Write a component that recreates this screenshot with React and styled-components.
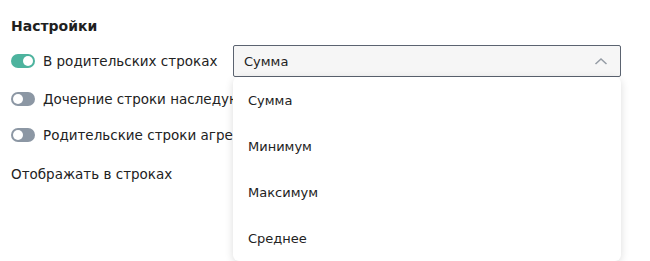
import React from 'react';
import styled, { createGlobalStyle } from 'styled-components';

const GlobalStyle = createGlobalStyle`
  body {
    margin: 0;
    background: #ffffff;
    font-family: "DejaVu Sans", Verdana, sans-serif;
    color: #222222;
  }
`;

const Panel = styled.div`
  box-sizing: border-box;
  padding: 16px 11px;
  width: 650px;
  min-height: 261px;
`;

const Title = styled.div`
  font-size: 14px;
  font-weight: 700;
  color: #1f1f1f;
  line-height: 20px;
  margin-bottom: 9px;
`;

const Rows = styled.div`
  display: flex;
  flex-direction: column;
`;

const Row = styled.div`
  display: flex;
  align-items: center;
  height: ${({ $h }) => $h}px;
  margin-top: ${({ $mt }) => $mt || 0}px;
`;

const Toggle = styled.div`
  position: relative;
  width: 24px;
  height: 14px;
  border-radius: 7px;
  background: ${({ $on }) => ($on ? '#4db39e' : '#8c97a4')};
  flex-shrink: 0;
  margin-right: 8px;
  &::after {
    content: '';
    position: absolute;
    top: 2px;
    left: ${({ $on }) => ($on ? '12px' : '2px')};
    width: 10px;
    height: 10px;
    border-radius: 50%;
    background: #ffffff;
  }
`;

const Label = styled.span`
  font-size: 13.5px;
  white-space: nowrap;
  color: #222222;
`;

const LabelCol = styled.div`
  display: flex;
  align-items: center;
  width: 222px;
`;

const SelectWrap = styled.div`
  position: relative;
  width: 388px;
`;

const SelectBox = styled.div`
  box-sizing: border-box;
  height: 32px;
  border: 1px solid #5b6370;
  border-radius: 2px;
  background: #f6f6f6;
  display: flex;
  align-items: center;
  justify-content: space-between;
  padding: 0 12px 0 10px;
  font-size: 13px;
`;

const Menu = styled.div`
  position: absolute;
  top: 32px;
  left: 0;
  width: 388px;
  background: #ffffff;
  border-radius: 6px;
  box-shadow: 0 2px 8px rgba(0, 0, 0, 0.14);
  z-index: 10;
`;

const Item = styled.div`
  height: 46px;
  display: flex;
  align-items: center;
  padding-left: 15px;
  font-size: 13px;
  color: #222222;
`;

const Chevron = () => (
  <svg width="14" height="8" viewBox="0 0 14 8" fill="none">
    <path d="M1.5 7L7 2L12.5 7" stroke="#959ca5" strokeWidth="1.5" />
  </svg>
);

const options = ['Сумма', 'Минимум', 'Максимум', 'Среднее'];

const App = () => (
  <>
    <GlobalStyle />
    <Panel>
      <Title>Настройки</Title>
      <Rows>
        <Row $h={32}>
          <LabelCol>
            <Toggle $on />
            <Label>В родительских строках</Label>
          </LabelCol>
          <SelectWrap>
            <SelectBox>
              <span>Сумма</span>
              <Chevron />
            </SelectBox>
            <Menu>
              {options.map((o) => (
                <Item key={o}>{o}</Item>
              ))}
            </Menu>
          </SelectWrap>
        </Row>
        <Row $h={38} $mt={3}>
          <Toggle />
          <Label>Дочерние строки наследуют значение</Label>
        </Row>
        <Row $h={34}>
          <Toggle />
          <Label>Родительские строки агрегируют значения</Label>
        </Row>
        <Row $h={44}>
          <Label>Отображать в строках</Label>
        </Row>
      </Rows>
    </Panel>
  </>
);

export default App;
